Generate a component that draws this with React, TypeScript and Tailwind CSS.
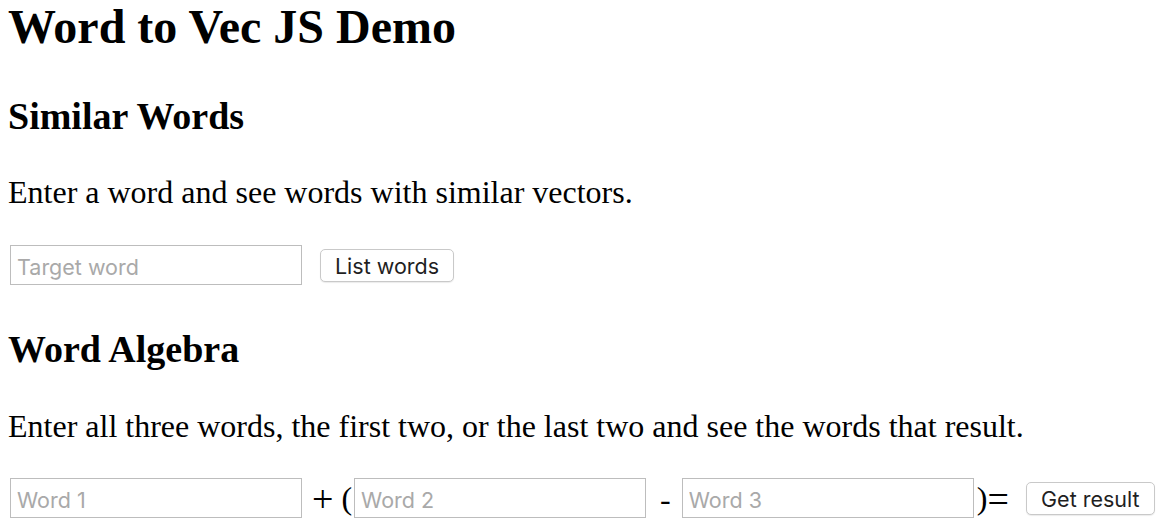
import React from 'react';

const serif = "font-['Liberation_Serif','Times_New_Roman',serif]";
const field =
  "w-[292px] h-[40px] border border-[#bdbdbd] bg-white px-[6px] pt-[3px] font-['Inter',sans-serif] text-[21.5px] text-black placeholder:text-[#a9a9a9] outline-none";
const btn =
  "h-[33px] rounded-[5px] border border-[#c9c9c9] bg-white pt-[3px] text-center font-['Inter',sans-serif] text-[21.5px] leading-none text-[#1f1f1f] shadow-[0_1px_1px_rgba(0,0,0,0.08)]";

export default function App() {
  return (
    <div className={`min-h-screen bg-white px-2 text-black ${serif}`}>
      <h1 className="m-0 text-[48px] font-bold leading-[53px]">Word to Vec JS Demo</h1>

      <h2 className="mt-[42px] text-[38px] font-bold leading-[42px]">Similar Words</h2>
      <p className="mt-[38px] text-[32px] leading-[35px]">Enter a word and see words with similar vectors.</p>
      <div className="mt-[35px] flex items-center">
        <input className={`ml-[2px] ${field}`} placeholder="Target word" />
        <button className={`ml-[18px] w-[134px] ${btn}`}>List words</button>
      </div>

      <h2 className="mt-[43px] text-[38px] font-bold leading-[42px]">Word Algebra</h2>
      <p className="mt-[39px] text-[32px] leading-[35px]">
        Enter all three words, the first two, or the last two and see the words that result.
      </p>
      <div className="mt-[34px] flex items-center text-[32px] leading-[35px]">
        <input className={`ml-[2px] ${field}`} placeholder="Word 1" />
        <span className="ml-[10px] pt-[3px] text-[38px]">+</span>
        <span className="ml-[8px]">(</span>
        <input className={`ml-[2px] ${field}`} placeholder="Word 2" />
        <span className="ml-[14px] pt-[2px]">-</span>
        <input className={`ml-[11px] ${field}`} placeholder="Word 3" />
        <span className="ml-[3px]">)</span>
        <span className="pt-[2px] text-[38px]">=</span>
        <button className={`ml-[17px] w-[129px] ${btn}`}>Get result</button>
      </div>
    </div>
  );
}
